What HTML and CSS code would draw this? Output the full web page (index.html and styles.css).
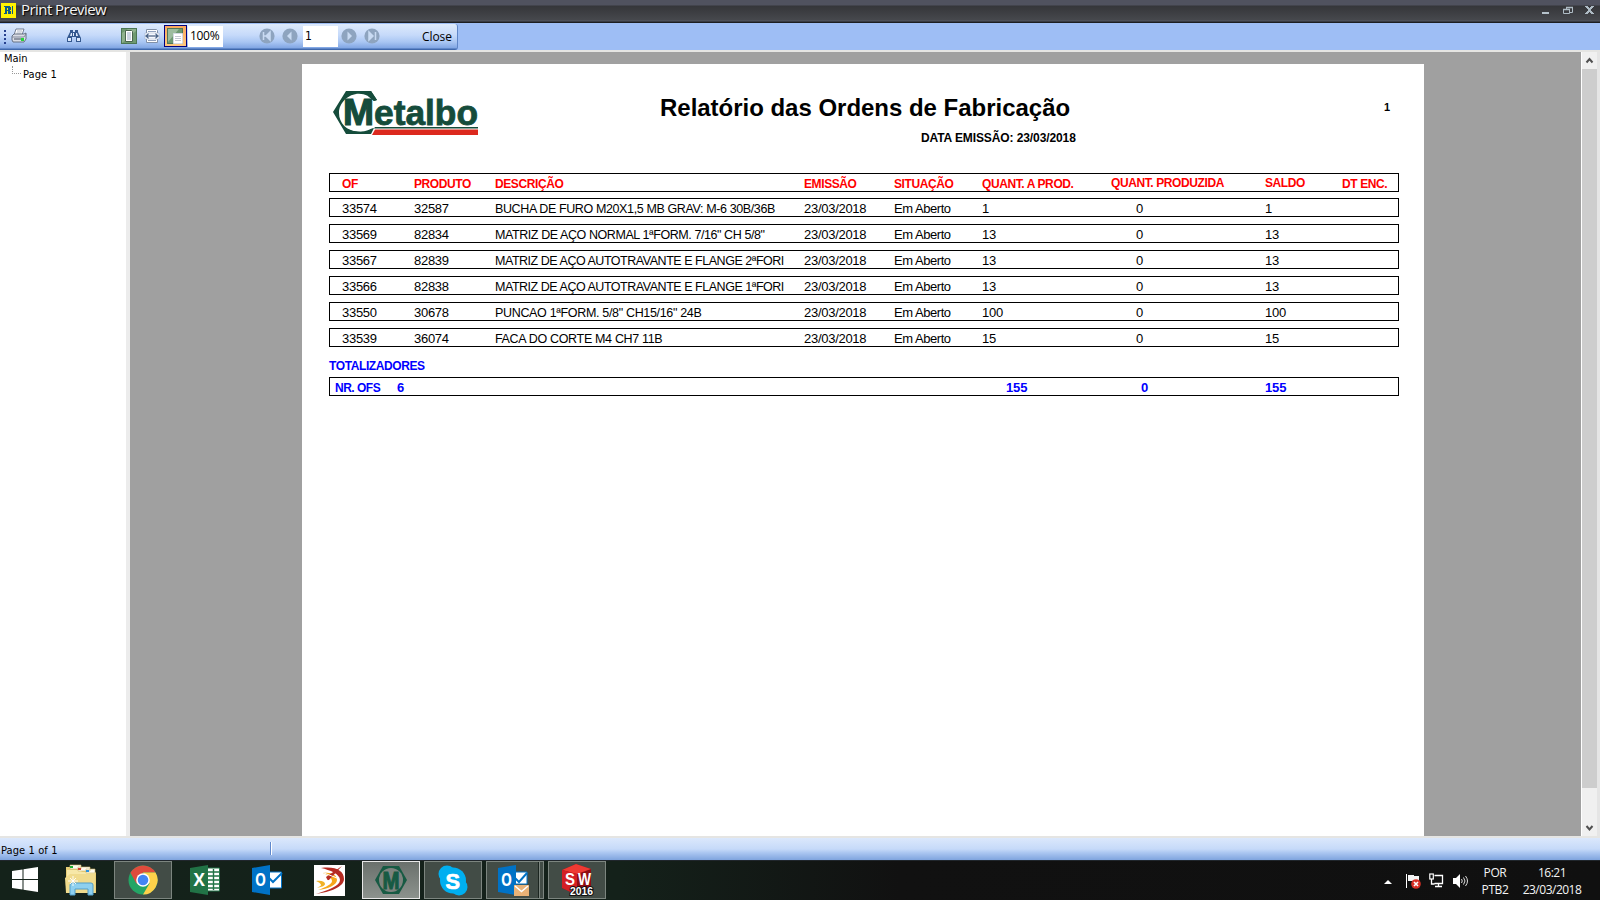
FILE: index.html
```html
<!DOCTYPE html>
<html lang="pt-BR">
<head>
<meta charset="utf-8">
<title>Print Preview</title>
<link rel="stylesheet" href="styles.css">
</head>
<body>
<div class="window">
  <header class="titlebar">
    <svg class="app-icon" width="15" height="15" viewBox="0 0 15 15"><rect width="15" height="15" fill="#fff200"/><rect x="2" y="2" width="11" height="11" fill="#fff200"/><path d="M3 3h6v1h1v3H9v1h1v3H7V8H6v3H3v-1h1V4H3zM6 5v2h1V5z" fill="#0b5a86"/><path d="M11 3h1v8h-1z" fill="#0b5a86"/></svg>
    <span class="title-text">Print Preview</span>
    <svg class="win-buttons" width="54" height="12" viewBox="0 0 54 12"><path d="M0 7h7v2H0z" fill="#b5c2cb"/><path d="M24.5 4V2.500h6v5H28M21.500 4.500h6v4h-6z" fill="none" stroke="#aebbc4"/><path d="M24 2.500h7M21 4.500h7" stroke="#aebbc4" stroke-width="1.500"/><path d="M43 1h3v1h1v1h1V2h1V1h3v1h-1v1h-1v1h-1v2h1v1h1v1h1v1h-3V8h-1V7h-1v1h-1v1h-3V8h1V7h1V6h1V4h-1V3h-1V2h-1z" fill="#aebbc4"/></svg>
  </header>

  <div class="toolbar-dock">
    <div class="toolbar">
      <span class="grip"><i></i><i></i><i></i><i></i></span>
      <svg class="ic printer" width="16" height="16" viewBox="0 0 16 16"><path d="M5 1h8l-2 6H3z" fill="#fff" stroke="#66738a" stroke-width=".9"/><path d="M6 3h5M5.500 5h5" stroke="#9aa5b8" stroke-width=".8"/><path d="M1 8l2-2h10l2-1v6l-2 3H2l-1-2z" fill="#dadde5" stroke="#5b6678" stroke-width=".9"/><path d="M1 9h12l2-3" fill="none" stroke="#6e7a8d" stroke-width=".8"/><path d="M3 11h7" stroke="#444f60"/><rect x="10" y="10" width="3" height="3" fill="#28d33c"/></svg>
      <svg class="ic find" width="16" height="16" viewBox="0 0 16 16"><path d="M4 2h3v2h2V2h3v2l3 6v4h-5V9H6v5H1v-4l3-6z" fill="#34588f"/><path d="M2 10h3v3H2zM11 10h3v3h-3zM5 5h1v3H4zM10 5h1l1 3h-2z" fill="#dbe8fa"/><path d="M7.500 5v3" stroke="#e4eefc"/></svg>
      <svg class="ic whole" width="16" height="16" viewBox="0 0 16 16"><rect x=".5" y=".5" width="15" height="15" fill="#6f9a70" stroke="#4c7654"/><path d="M1 15V5l6-4h8v2z" fill="#a4c2a0" opacity=".6"/><path d="M4.500 2.500h6l1 1v10h-7z" fill="#fff" stroke="#49644f"/><path d="M6 5h4M6 7h4M6 9h4M6 11h4" stroke="#9aabc6"/></svg>
      <svg class="ic width" width="16" height="16" viewBox="0 0 16 16"><path d="M2.500 1.500h10l1 1v12h-11z" fill="#fff" stroke="#8190a8"/><path d="M4 3.500h8M4 12.500h8" stroke="#91a1be"/><path d="M1 5h14v6H1z" fill="#f6f9ff" stroke="#9aa9c2" stroke-width=".5"/><path d="M1 8l3.500-3v2h7V5L15 8l-3.500 3V9h-7v2z" fill="#4d6588"/><path d="M4 8h8" stroke="#fff" stroke-width=".7"/></svg>
      <span class="tool-active"><svg width="18" height="17" viewBox="0 0 18 17"><rect x=".5" y=".5" width="15" height="15" fill="#6c9870" stroke="#507758"/><path d="M1 14L12 1H1z" fill="#a9c5aa" opacity=".8"/><path d="M6.500 5.500h9v10h-9z" fill="#fff" stroke="#d3dae3"/><path d="M8 8.500h6M8 10.500h6M8 12.500h6" stroke="#b2bac5" stroke-width=".8"/></svg></span>
      <span class="field zoom">100%</span>
      <svg class="nav n1" width="16" height="16" viewBox="0 0 16 16"><circle cx="8" cy="8" r="7.600" fill="#8ea4bf"/><path d="M4.500 4v8M7 8l4-4v8zM5 8h3" fill="#c9dbf3" stroke="#c9dbf3" stroke-width="1.500"/></svg>
      <svg class="nav n2" width="16" height="16" viewBox="0 0 16 16"><circle cx="8" cy="8" r="7.600" fill="#8ea4bf"/><path d="M5 8l4.500-4.500v9z" fill="#c9dbf3"/></svg>
      <span class="field pageno">1</span>
      <svg class="nav n3" width="16" height="16" viewBox="0 0 16 16"><circle cx="8" cy="8" r="7.600" fill="#8ea4bf"/><path d="M11 8L6.500 3.500v9z" fill="#c9dbf3"/></svg>
      <svg class="nav n4" width="16" height="16" viewBox="0 0 16 16"><circle cx="8" cy="8" r="7.600" fill="#8ea4bf"/><path d="M11.500 4v8M9 8L5 4v8z" fill="#c9dbf3" stroke="#c9dbf3" stroke-width="1.500"/></svg>
      <span class="close">Close</span>
    </div>
  </div>

  <main class="workspace">
    <nav class="tree">
      <div class="tree-root">Main</div>
      <div class="tree-child"><i class="branch"></i>Page 1</div>
    </nav>
    <div class="splitter"></div>
    <section class="canvas">
      <article class="sheet">
        <div class="sheet-head">
          <svg class="logo" width="147" height="46" viewBox="0 0 147 46"><path d="M13 1h25l6 9-3 1-6-5C21-1 6 10 6 23s13 23 30 16l5-1-3 6H13L0 22z" fill="#154c3b"/><path d="M34 7C20 1 7 11 7 23c0 9 7 17 16 18 7 1 12 0 16-3V9z" fill="#fff"/><text x="10" y="35" textLength="31" lengthAdjust="spacingAndGlyphs" class="logo-m">M</text><text x="41" y="35" textLength="104" lengthAdjust="spacingAndGlyphs" class="logo-t">etalbo</text><path d="M36 1h2l6 9-3 1-6-5z" fill="#154c3b"/><path d="M42 37h103v1.500H41z" fill="#154c3b"/><path d="M42 39.500h103V45H39z" fill="#dc291e"/></svg>
          <div class="headings">
            <h1>Relatório das Ordens de Fabricação</h1>
            <p>DATA EMISSÃO: 23/03/2018</p>
          </div>
          <span class="page-num">1</span>
        </div>
        <div class="rows">
          <div class="row head"><span>OF</span><span>PRODUTO</span><span>DESCRIÇÃO</span><span>EMISSÃO</span><span>SITUAÇÃO</span><span>QUANT. A PROD.</span><span class="up">QUANT. PRODUZIDA</span><span class="up">SALDO</span><span>DT ENC.</span></div>
          <div class="row"><span>33574</span><span>32587</span><span class="desc d1">BUCHA DE FURO M20X1,5 MB GRAV: M-6 30B/36B</span><span>23/03/2018</span><span class="sit">Em Aberto</span><span>1</span><span class="made">0</span><span>1</span></div>
          <div class="row"><span>33569</span><span>82834</span><span class="desc d2">MATRIZ DE AÇO NORMAL 1ªFORM. 7/16" CH 5/8"</span><span>23/03/2018</span><span class="sit">Em Aberto</span><span>13</span><span class="made">0</span><span>13</span></div>
          <div class="row"><span>33567</span><span>82839</span><span class="desc d3">MATRIZ DE AÇO AUTOTRAVANTE E FLANGE 2ªFORI</span><span>23/03/2018</span><span class="sit">Em Aberto</span><span>13</span><span class="made">0</span><span>13</span></div>
          <div class="row"><span>33566</span><span>82838</span><span class="desc d3">MATRIZ DE AÇO AUTOTRAVANTE E FLANGE 1ªFORI</span><span>23/03/2018</span><span class="sit">Em Aberto</span><span>13</span><span class="made">0</span><span>13</span></div>
          <div class="row"><span>33550</span><span>30678</span><span class="desc d5">PUNCAO 1ªFORM. 5/8" CH15/16" 24B</span><span>23/03/2018</span><span class="sit">Em Aberto</span><span>100</span><span class="made">0</span><span>100</span></div>
          <div class="row"><span>33539</span><span>36074</span><span class="desc d5">FACA DO CORTE M4 CH7 11B</span><span>23/03/2018</span><span class="sit">Em Aberto</span><span>15</span><span class="made">0</span><span>15</span></div>
        </div>
        <h2>TOTALIZADORES</h2>
        <div class="totals"><span class="nr">NR. OFS</span><span>6</span><span>155</span><span>0</span><span>155</span></div>
      </article>
    </section>
    <div class="scrollbar">
      <svg width="15" height="17" viewBox="0 0 15 17"><path d="M4.500 10.500l3-3.500 3 3.500" fill="none" stroke="#505050" stroke-width="2"/></svg>
      <div class="thumb"></div>
      <svg class="down" width="15" height="17" viewBox="0 0 15 17"><path d="M4.500 7l3 3.500 3-3.500" fill="none" stroke="#505050" stroke-width="2"/></svg>
    </div>
  </main>

  <footer class="statusbar"><span class="status-text">Page 1 of 1</span></footer>

  <div class="taskbar">
    <div class="task start"><svg width="28" height="28" viewBox="0 0 28 28"><path d="M1 5l10.500-1.500V13H1zM12.500 3.300L27 1v12H12.500zM1 14h10.500v9.500L1 22zM12.500 14H27v12l-14.500-2.200z" fill="#fff"/></svg></div>
    <div class="task explorer"><svg width="34" height="32" viewBox="0 0 34 32"><path d="M2 3h13l2 2h12l3 4v20H2z" fill="#e9cf78"/><path d="M3 6h13l2 2h13v20H3z" fill="#f7e8a8"/><path d="M6 1h11v4H6zM14 3h12v4H14zM22 5h9v4h-9z" fill="#fdfaf0" stroke="#ccb56a" stroke-width=".6"/><path d="M6 2h3v2H6z" fill="#1fb035"/><path d="M14 4h3v2h-3z" fill="#d44432"/><path d="M22 6h3v2h-3z" fill="#2e93dc"/><path d="M1 14l5-4h25v19H2z" fill="#f0db8d"/><path d="M6 31V21q0-2 2-2h19q2 0 2 2v10h-5v-6H11v6z" fill="#8ed0ef" stroke="#529fca"/><path d="M9 12v10M4 17h10M6 14l6 6M12 14l-6 6" stroke="#fff" stroke-width=".9"/></svg></div>
    <div class="task boxed"><svg width="30" height="30" viewBox="0 0 30 30"><circle cx="15" cy="15" r="14.500" fill="#24a565"/><path d="M2.450 7.750A14.500 14.500 0 0 1 27.500 7.500H15L8.500 18.750z" fill="#df4b3c"/><path d="M27.500 7.500A14.500 14.500 0 0 1 15 29.500l6.500-11L15 7.500z" fill="#fdd14a"/><circle cx="15" cy="15" r="6.800" fill="#fff"/><circle cx="15" cy="15" r="5.300" fill="#4285f4"/></svg></div>
    <div class="task office"><svg width="32" height="32" viewBox="0 0 32 32"><path d="M18 4h12.500v23H18z" fill="#fff" stroke="#217346"/><path d="M19 8h11M19 12h11M19 16h11M19 20h11M19 24h11M24.500 5v21" stroke="#217346" stroke-width="1.400"/><path d="M1 4l18-3v30L1 28z" fill="#217346"/><text x="4.500" y="22" class="ms-letter">X</text></svg></div>
    <div class="task outlook"><svg width="32" height="32" viewBox="0 0 32 32"><path d="M17 8h13.500v16H17z" fill="#fff" stroke="#0072c6"/><path d="M18 14l4 4 9-9" fill="none" stroke="#0072c6" stroke-width="2"/><path d="M1 4l18-3v30L1 28z" fill="#0072c6"/><text x="4" y="22" textLength="11" lengthAdjust="spacingAndGlyphs" class="ms-letter">O</text></svg></div>
    <div class="task"><svg width="31" height="31" viewBox="0 0 31 31"><path d="M0 0h31v31H0z" fill="#fff"/><path d="M7 3c15-2 23 3 23 11S16 27 2 29c12-4 24-8 24-14S16 5 7 3z" fill="#b52b22"/><path d="M9 8c9-1 14 2 14 7S14 24 4 25c8-3 14-6 14-9s-4-6-9-8z" fill="#f6a61a"/><path d="M2 16c6-1 9 1 9 3s-4 3-8 4c3-2 4-2 4-3s-2-3-5-4z" fill="#f1b227"/><path d="M28 1L12 12l2 4z" fill="#b52b22"/><path d="M5 14l12 2M10 8l13 5" stroke="#fff"/></svg></div>
    <div class="task boxed current"><svg width="32" height="28" viewBox="0 0 32 28"><path d="M8 0h16l8 14-8 14H8L0 14z" fill="#175a43"/><circle cx="16" cy="14" r="12" fill="#7d837e"/><text x="7.500" y="22.500" textLength="17" lengthAdjust="spacingAndGlyphs" class="m-letter">M</text></svg></div>
    <div class="task boxed"><svg width="30" height="31" viewBox="0 0 30 31"><circle cx="9" cy="9" r="8.500" fill="#00aff0"/><circle cx="21" cy="22" r="8.500" fill="#00aff0"/><circle cx="15" cy="15.500" r="13" fill="#00aff0"/><text x="7.500" y="23.500" textLength="14.500" lengthAdjust="spacingAndGlyphs" class="s-letter">S</text></svg></div>
    <div class="task boxed stack"><svg width="32" height="32" viewBox="0 0 32 32"><path d="M17 8h13v12H17z" fill="#fff" stroke="#0072c6"/><path d="M18 14l4 4 8-9" fill="none" stroke="#0072c6" stroke-width="2"/><path d="M1 4l18-3v30L1 28z" fill="#0072c6"/><text x="4" y="22" textLength="11" lengthAdjust="spacingAndGlyphs" class="ms-letter">O</text><path d="M17 21h15v11H17z" fill="#e9b277"/><path d="M18 22l6.500 5.500L31 22" fill="none" stroke="#fff" stroke-width="1.500"/></svg></div>
    <div class="task boxed sw"><svg width="34" height="34" viewBox="0 0 34 34"><path d="M2 7L16 1l15 5v19l-14 7L2 25z" fill="#8f0d13"/><path d="M2 7L16 1l15 5-14 5z" fill="#ee3a33"/><path d="M2 7l15 4v21L2 25z" fill="#d41f24"/><text x="5" y="22" textLength="10" lengthAdjust="spacingAndGlyphs" class="sw-letter">S</text><text x="18" y="22" textLength="13" lengthAdjust="spacingAndGlyphs" class="sw-letter">W</text><text x="10" y="32" textLength="23" lengthAdjust="spacingAndGlyphs" class="sw-year">2016</text></svg></div>
    <div class="tray">
      <svg class="t-up" width="8" height="6" viewBox="0 0 8 6"><path d="M0 5l4-4 4 4z" fill="#fff"/></svg>
      <svg class="t-flag" width="17" height="16" viewBox="0 0 17 16"><path d="M1.500 1v14" stroke="#fff"/><path d="M3 2h6v1h5v6H8V8H3z" fill="#f4f4f4"/><circle cx="11" cy="11" r="4.800" fill="#d93025"/><path d="M9 9l4 4M13 9l-4 4" stroke="#fff" stroke-width="1.600"/></svg>
      <svg class="t-net" width="15" height="15" viewBox="0 0 15 15"><path d="M5.500 2.500h8v8h-8M9.500 10v3M6 13.500h7M2.500 6v5h3" fill="none" stroke="#fff" stroke-width="1.300"/><rect x=".8" y="1" width="3.500" height="5" fill="#111" stroke="#fff" stroke-width="1.200"/></svg>
      <svg class="t-vol" width="16" height="14" viewBox="0 0 16 14"><path d="M0 4h3l4-4v14l-4-4H0z" fill="#fff"/><path d="M8.500 5q1.500 2 0 4M10.500 3.500q3 3.500 0 7M12.500 2q4 5 0 10" fill="none" stroke="#ddd"/></svg>
      <div class="lang"><span>POR</span><span>PTB2</span></div>
      <div class="clock"><span>16:21</span><span>23/03/2018</span></div>
    </div>
  </div>
</div>
</body>
</html>
```
FILE: styles.css
```css
* { box-sizing: border-box; }
body { margin: 0; overflow: hidden; background: #fff; }
svg { display: block; flex: none; overflow: visible; }
.window { display: flex; flex-direction: column; width: 1600px; height: 900px; font: 11px/13px "DejaVu Sans Condensed", "DejaVu Sans", sans-serif; color: #000; }

.titlebar { display: flex; flex: none; height: 23px; padding: 2px 0 0 1px; background: linear-gradient(#50525f 0, #50525f 5px, #35363a 6px, #3b3c40 11px, #46484d 20px, #555864 21px, #1d1f22 22px); }
.app-icon { margin-top: 1px; }
.title-text { margin: -1px 0 0 5px; font: 15px/17px "Open Sans", "Noto Sans", sans-serif; letter-spacing: -.55px; color: #f4f4f4; text-shadow: 1px 1px 1px #000; white-space: nowrap; }
.win-buttons { margin: 3px 4px 0 auto; }

.toolbar-dock { flex: none; height: 29px; padding-top: 1px; background: linear-gradient(#9ebef5 27px, #e5e5e3 27px); }
.toolbar { display: flex; width: 458px; height: 26px; padding-top: 2px; background: linear-gradient(#deeafc, #c6dafa 11px, #a9c6f3 18px, #81a6e4 24px, #3f68ac 25px); border-right: 1px solid #5f86c8; border-radius: 0 3px 3px 0; white-space: nowrap; }
.toolbar > * { flex: none; }
.grip { display: grid; gap: 2px; width: 3px; height: 14px; margin: 4px 4px 0 4px; }
.grip i { width: 2px; height: 2px; background: #27418f; }
.ic { margin-top: 2px; }
.find { margin-left: 39px; }
.whole { margin-left: 39px; }
.width { margin-left: 7px; }
.tool-active { display: block; width: 23px; height: 22px; margin: -1px 0 0 4px; padding: 2px; border: 1px solid #000080; background: linear-gradient(#fba85d, #ffc77d); }
.field { height: 21px; padding: 3px 0 0 3px; background: #fff; }
.zoom { width: 35px; margin-left: 1px; padding: 3px 0 0 2px; font: 12px/14px "Open Sans", sans-serif; letter-spacing: -.3px; }
.nav { margin-top: 2px; }
.n1 { margin-left: 36px; }
.n2 { margin-left: 7px; }
.pageno { width: 35px; margin-left: 5px; padding: 4px 0 0 2px; font-size: 12px; }
.n3 { margin-left: 3px; }
.n4 { margin-left: 7px; }
.close { margin: 4px 0 0 42px; font: 12px/14px "Open Sans", sans-serif; letter-spacing: -.1px; }

.workspace { display: flex; flex: none; height: 784px; }
.tree { width: 126px; background: #fff; }
.tree-root { padding-left: 4px; }
.tree-child { display: flex; padding: 3px 0 0 12px; white-space: nowrap; letter-spacing: .1px; }
.branch { width: 9px; height: 8px; margin: -2px 2px 0 0; border: 1px dotted #999; border-width: 0 0 1px 1px; }
.splitter { width: 4px; background: #ececec; }
.canvas { width: 1451px; padding: 12px 0 0 172px; background: #a0a0a0; }
.sheet { width: 1122px; height: 772px; padding: 26px 25px 0 27px; background: #fff; font: 13px/17px "Liberation Sans", Arial, sans-serif; }
.sheet-head { display: flex; height: 83px; }
.logo { margin-left: 4px; }
.logo-m { font: bold 37px "Liberation Sans", sans-serif; fill: #154c3b; stroke: #154c3b; stroke-width: 1.2px; }
.logo-t { font: bold 35px "Liberation Sans", sans-serif; fill: #154c3b; stroke: #154c3b; stroke-width: .8px; }
.headings { width: 600px; margin-left: 180px; white-space: nowrap; }
h1 { margin: 4px 0 0; font-size: 24px; line-height: 28px; letter-spacing: -.02px; }
p { margin: 8px 0 0 261px; font-size: 12px; font-weight: bold; line-height: 17px; letter-spacing: -.1px; }
.page-num { margin: 9px 0 0 124px; font-size: 11px; font-weight: bold; line-height: 17px; }
.rows { display: flex; flex-direction: column; gap: 7px; }
.row { display: grid; grid-template-columns: 72px 81px 309px 90px 88px 129px 154px 77px 1fr; flex: none; height: 19px; padding: 1px 0 0 12px; border: 1px solid #000; white-space: nowrap; letter-spacing: -.28px; }
.row span { height: 17px; }
.head { margin-bottom: -1px; padding-top: 2px; color: #f00; font-size: 12px; font-weight: bold; letter-spacing: -.4px; }
.head .up { margin-top: -1px; }
.made { padding-left: 25px; }
.desc { padding-top: 1px; font-size: 12.5px; }
.d1 { letter-spacing: -.38px; }
.d2 { letter-spacing: -.42px; }
.d3 { letter-spacing: -.47px; }
.d5 { letter-spacing: -.33px; }
.sit { letter-spacing: -.45px; }
h2 { margin: 11px 0 0; font-size: 12px; line-height: 17px; letter-spacing: -.4px; color: #00f; }
.totals { display: grid; grid-template-columns: 62px 609px 135px 124px 1fr; height: 19px; margin-top: 2px; padding: 1px 0 0 5px; border: 1px solid #000; color: #00f; font-weight: bold; font-size: 13px; letter-spacing: -.15px; white-space: nowrap; }
.nr { padding-top: 1px; font-size: 12px; letter-spacing: -.5px; line-height: 16px; }

.scrollbar { display: flex; flex-direction: column; width: 19px; border: solid #fff; border-width: 0 0 0 1px; border-right: 3px solid #e5e5e5; background: #f0f0f0; }
.thumb { height: 719px; background: #cdcdcd; }
.down { margin-top: auto; }

.statusbar { flex: none; height: 24px; padding-top: 2px; background: linear-gradient(#e5e5e3 2px, #dbe8fc 2px, #c6daf9 13px, #a9c5f0 17px, #7fa4de 24px); }
.status-text { display: block; width: 271px; height: 13px; margin-top: 4px; padding-left: 1px; line-height: 18px; letter-spacing: .1px; border-right: 1px solid #5f88cc; box-shadow: 1px 0 #fff; }

.taskbar { display: flex; flex: none; height: 40px; background: linear-gradient(90deg, #14221a 0, #14211a 620px, #111 900px, #101010); border-top: 1px solid #20262c; font: 12px/17px "Open Sans", sans-serif; color: #f4f4f4; }
.task { display: flex; align-items: center; justify-content: center; flex: none; width: 58px; height: 38px; margin-right: 4px; border: 1px solid transparent; }
.start { width: 49px; margin-right: 3px; }
.office { padding-right: 1px; }
.boxed { background: #424c46; border-color: #7c857f; }
.current { background: linear-gradient(#6a706c, #8c928d); border-color: #e8e8e8; }
.stack { padding-right: 4px; box-shadow: inset -3px 0 #424c46, inset -4px 0 #7c857f, inset -5px 0 #1b2520; }
.ms-letter { font: bold 17px "Open Sans", sans-serif; fill: #fff; }
.m-letter { font: bold 23px "Liberation Sans", sans-serif; fill: #175a43; stroke: #175a43; stroke-width: 1px; }
.s-letter { font: bold 22px "Liberation Sans", sans-serif; fill: #fff; stroke: #fff; stroke-width: .7px; }
.sw-letter { font: bold 17px "Liberation Sans", sans-serif; fill: #fff; }
.sw-year { font: bold 10px "Liberation Sans", sans-serif; fill: #fff; stroke: #111; stroke-width: 2px; paint-order: stroke; }
.tray { display: flex; margin-left: auto; }
.t-up { margin: 18px 13px 0 0; }
.t-flag { margin: 12px 7px 0 0; }
.t-net { margin: 12px 9px 0 0; }
.t-vol { margin: 13px 9px 0 0; }
.lang, .clock { display: flex; flex-direction: column; align-items: center; padding-top: 3px; white-space: nowrap; letter-spacing: -.4px; }
.lang { width: 34px; }
.clock { width: 62px; margin: 0 17px 0 9px; letter-spacing: -.5px; }
```
